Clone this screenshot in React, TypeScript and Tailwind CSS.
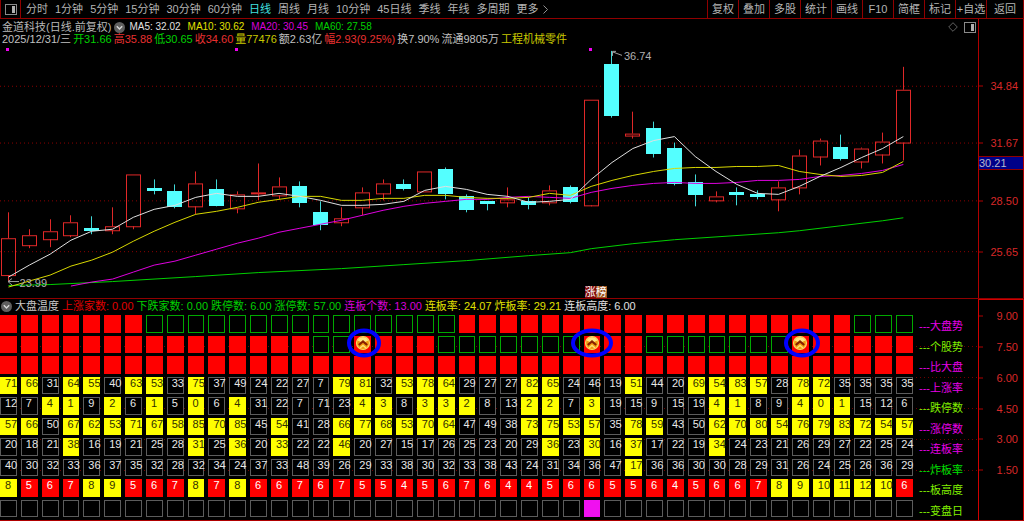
import { clsx } from 'clsx';

type Candle = [top: number, bottom: number, high: number, low: number, up: 0 | 1];

const PERIODS = ['分时', '1分钟', '5分钟', '15分钟', '30分钟', '60分钟', '日线', '周线', '月线', '10分钟', '45日线', '季线', '年线', '多周期'];
const TOOLS = ['复权', '叠加', '多股', '统计', '画线', 'F10', '简框', '标记', '+自选'];

const COLS = 44;
const TOP = 19;
const HEIGHT = 280;
const cx = (i: number) => 8.5 + 20.81 * i;

// Body top, body bottom, high, low, rising
const CANDLES: Candle[] = [
  [239, 276, 213, 282, 1], [236, 246, 230, 249, 1], [232, 240, 220, 248, 1], [223, 236, 216, 238, 1],
  [229, 232, 217, 235, 0], [227, 231, 208, 235, 1], [175, 227, 175, 230, 1], [189, 192, 180, 195, 0],
  [192, 208, 185, 209, 0], [184, 207, 172, 215, 1], [190, 207, 180, 207, 0], [195, 209, 192, 214, 1],
  [193, 194, 164, 201, 1], [187, 196, 178, 200, 1], [187, 204, 182, 208, 0], [213, 226, 202, 231, 0],
  [219, 223, 208, 227, 1], [193, 208, 188, 216, 1], [184, 194, 180, 201, 1], [185, 190, 180, 191, 0],
  [172, 192, 172, 192, 1], [170, 195, 168, 200, 0], [197, 211, 195, 213, 0], [202, 205, 202, 211, 0],
  [200, 203, 188, 208, 1], [202, 206, 198, 210, 0], [191, 203, 186, 206, 1], [188, 203, 186, 204, 0],
  [100, 206, 100, 207, 1], [64, 116, 51, 118, 0], [134, 136, 112, 139, 1], [128, 154, 122, 158, 0],
  [148, 185, 143, 186, 0], [183, 196, 175, 207, 0], [197, 201, 192, 203, 1], [193, 196, 188, 206, 0],
  [195, 198, 191, 200, 0], [188, 200, 182, 212, 1], [156, 188, 150, 195, 1], [141, 157, 139, 166, 1],
  [147, 159, 135, 161, 0], [149, 162, 148, 169, 1], [142, 155, 133, 164, 1], [90, 143, 67, 161, 1],
];

const MA5 = [278, 266, 255, 241, 232, 230, 218, 210, 206, 198, 194, 197, 197, 194, 197, 201, 206, 206, 205, 202, 191, 187, 190, 195, 197, 203, 202, 200, 180, 163, 149, 141, 137, 157, 172, 185, 194, 195, 187, 177, 168, 158, 149, 137];
const MA10 = [288, 282, 276, 267, 261, 253, 242, 232, 223, 215, 212, 208, 203, 200, 197, 197, 201, 201, 199, 199, 196, 196, 198, 199, 199, 198, 194, 196, 187, 181, 176, 172, 169, 168, 168, 167, 167, 166, 172, 175, 177, 176, 173, 162];
const MA20 = [287, 283, 280, 273, 266, 262, 256, 250, 244, 239, 233, 229, 225, 221, 216, 211, 207, 204, 202, 200, 200, 198, 197, 198, 199, 193, 189, 186, 184, 183, 184, 184, 183, 181, 181, 180, 177, 176, 174, 171, 165];
const MA60: [number, number][] = [[0, 286], [2, 285], [5, 282], [9, 277], [12, 273], [16, 269], [19, 265], [22, 261], [25, 256], [27, 253], [28, 249], [30, 244], [32, 240], [37, 233], [38, 231], [40, 226], [42, 221], [43, 218]];

const line = (ys: number[], from = 0) => ys.map((y, i) => `${cx(i + from)},${y}`).join(' ');

const PRICES: [string, number][] = [['34.84', 86], ['31.67', 143], ['28.50', 201], ['25.65', 252]];
const LEVELS = ['9.00', '7.50', '6.00', '4.50', '3.00', '1.50'];

const QUOTE = [
  ['2025/12/31/三', 'text-[#c0c0c0]'],
  ['开31.66', 'text-[#00d000]'],
  ['高35.88', 'text-[#e83030]'],
  ['低30.65', 'text-[#00d000]'],
  ['收34.60', 'text-[#e83030]'],
  ['量77476', 'text-[#c8c800]'],
  ['额2.63亿', 'text-[#c0c0c0]'],
  ['幅2.93(9.25%)', 'text-[#e83030]'],
  ['换7.90%', 'text-[#c0c0c0]'],
  ['流通9805万', 'text-[#c0c0c0]'],
  ['工程机械零件', 'text-[#c8c800]'],
];

const AVERAGES = [
  ['MA5: 32.02', 'text-[#e0e0e0]'],
  ['MA10: 30.62', 'text-[#e0e000]'],
  ['MA20: 30.45', 'text-[#d800d8]'],
  ['MA60: 27.58', 'text-[#00d000]'],
];

const INDICATORS = [
  ['上涨家数: 0.00', 'text-[#e00000]'],
  ['下跌家数: 0.00', 'text-[#00d000]'],
  ['跌停数: 6.00', 'text-[#00d000]'],
  ['涨停数: 57.00', 'text-[#00d000]'],
  ['连板个数: 13.00', 'text-[#d800d8]'],
  ['连板率: 24.07', 'text-[#e0e000]'],
  ['炸板率: 29.21', 'text-[#e0e000]'],
  ['连板高度: 6.00', 'text-[#e0e0e0]'],
];

const RED = 'bg-[#ff0000] text-white';
const GREEN = 'bg-black ring-1 ring-inset ring-[#00a800]';
const GRAY = 'bg-black ring-1 ring-inset ring-[#5c5c5c] text-[#e8e8e8]';
const YELLOW = 'bg-[#ffff00] text-[#303000]';
const MAGENTA = 'bg-[#f010f0]';

const PINK_TEXT = 'text-[#e800e8]';
const LIME_TEXT = 'text-[#80f000]';

type Row = { label: string; tone: string; values?: number[]; style: (v: number, i: number) => string };

const ROWS: Row[] = [
  { label: '大盘势', tone: PINK_TEXT, style: (_, i) => ((i > 6 && i < 22) || i > 40 ? GREEN : RED) },
  { label: '个股势', tone: LIME_TEXT, style: (_, i) => ([15, 16].includes(i) || (i > 20 && i < 28) || (i > 30 && i < 38) ? GREEN : RED) },
  { label: '比大盘', tone: PINK_TEXT, style: () => RED },
  {
    label: '上涨率', tone: PINK_TEXT, style: (v) => (v > 50 ? YELLOW : GRAY),
    values: [71, 66, 31, 64, 55, 40, 63, 53, 33, 75, 37, 49, 24, 22, 27, 7, 79, 81, 32, 53, 78, 64, 29, 27, 27, 82, 65, 24, 46, 19, 51, 44, 20, 69, 54, 83, 57, 28, 78, 72, 35, 35, 35, 35],
  },
  {
    label: '跌停数', tone: LIME_TEXT, style: (v) => (v < 5 ? YELLOW : GRAY),
    values: [12, 7, 4, 1, 9, 2, 6, 1, 5, 0, 6, 4, 31, 22, 7, 71, 23, 4, 3, 8, 3, 3, 2, 8, 13, 2, 2, 7, 3, 19, 15, 9, 15, 19, 4, 1, 8, 9, 4, 0, 1, 15, 12, 6],
  },
  {
    label: '涨停数', tone: PINK_TEXT, style: (v) => (v > 50 ? YELLOW : GRAY),
    values: [57, 66, 50, 67, 62, 53, 71, 67, 58, 85, 70, 85, 45, 54, 41, 28, 66, 77, 68, 53, 70, 64, 47, 49, 38, 73, 75, 53, 57, 35, 78, 59, 43, 50, 62, 70, 80, 54, 76, 79, 83, 72, 54, 57],
  },
  {
    label: '连板率', tone: PINK_TEXT, style: (v) => (v >= 30 ? YELLOW : GRAY),
    values: [20, 18, 21, 38, 16, 19, 21, 25, 28, 31, 25, 36, 20, 33, 22, 22, 46, 20, 27, 15, 17, 26, 25, 23, 20, 29, 36, 23, 30, 16, 37, 17, 22, 19, 34, 24, 23, 21, 26, 29, 27, 22, 25, 24],
  },
  {
    label: '炸板率', tone: 'text-[#00e000]', style: (v) => (v < 20 ? YELLOW : GRAY),
    values: [40, 30, 32, 33, 36, 37, 35, 32, 28, 32, 34, 24, 37, 33, 48, 39, 26, 29, 33, 38, 30, 32, 33, 38, 43, 24, 31, 34, 36, 47, 17, 36, 36, 30, 30, 28, 29, 31, 26, 24, 25, 26, 36, 29],
  },
  {
    label: '板高度', tone: LIME_TEXT, style: (v) => (v >= 8 ? YELLOW : RED),
    values: [8, 5, 6, 7, 8, 9, 5, 6, 7, 8, 7, 8, 6, 6, 7, 6, 7, 5, 5, 4, 5, 6, 7, 6, 4, 4, 5, 6, 6, 5, 5, 6, 4, 5, 6, 6, 7, 8, 9, 10, 11, 12, 10, 6],
  },
  { label: '变盘日', tone: LIME_TEXT, style: (_, i) => (i === 28 ? MAGENTA : GRAY) },
];

// Column of each marked signal, with the radius and shift of its ring
const SIGNALS: Record<number, { rx: number; dx: number }> = {
  17: { rx: 15, dx: 1 },
  28: { rx: 19, dx: 0 },
  38: { rx: 16, dx: 2 },
};

function PanelIcon() {
  return (
    <svg width="12" height="11" viewBox="0 0 12 11" fill="none" shapeRendering="crispEdges">
      <rect x="0.5" y="0.5" width="11" height="10" stroke="#8a8a8a" />
      <rect x="7" y="2" width="3" height="7" fill="#b0b0b0" />
    </svg>
  );
}

function Chevron() {
  return (
    <svg width="11" height="11" viewBox="0 0 11 11" fill="none">
      <circle cx="5.5" cy="5.5" r="5.5" fill="#5f5f5f" />
      <path d="M2.8 4.3 5.5 7l2.7-2.7" stroke="#d8d8d8" strokeWidth="1.4" />
    </svg>
  );
}

function Signal({ rx, dx }: { rx: number; dx: number }) {
  return (
    <svg
      className="absolute left-1/2 top-1/2 z-10 -translate-x-1/2 -translate-y-1/2"
      width="46"
      height="32"
      viewBox="-23 -16 46 32"
      fill="none"
    >
      <circle cx="0" cy="-1" r="6.5" fill="#f09a10" stroke="#f8d860" strokeWidth="1.2" />
      <path d="M-5.3-3.5a6 6 0 0 1 10.6 0L0-1Z" fill="#ffe880" />
      <path d="M-4.2 1 0-2.6 4.2 1" stroke="#8a2000" strokeWidth="2.2" />
      <path d="M-3 4 0 1.4 3 4" stroke="#ffe070" strokeWidth="1.4" />
      <ellipse cx={dx} cy="-1" rx={rx} ry="12.5" stroke="#0000ff" strokeWidth="4" />
    </svg>
  );
}

function Toolbar() {
  return (
    <header className="flex h-[19px] shrink-0 items-stretch border-b border-[#900000] text-[#b4b4b4]">
      <button aria-label="面板" className="flex w-[21px] items-center justify-center border-x border-[#900000]">
        <PanelIcon />
      </button>
      <nav className="flex flex-1 items-center gap-[7px] pl-[5px]">
        {PERIODS.map((p) => (
          <button key={p} className={clsx(p === '日线' && 'text-[#40e0e0]')}>{p}</button>
        ))}
        <button className="flex items-center gap-1">
          更多
          <svg width="5" height="9" viewBox="0 0 5 9" fill="none">
            <path d="m.5.5 4 4-4 4" stroke="#909090" />
          </svg>
        </button>
      </nav>
      {TOOLS.map((t) => (
        <button key={t} className="w-[31px] border-l border-[#900000]">{t}</button>
      ))}
      <button className="w-[38px] border-x border-[#900000]">返回</button>
    </header>
  );
}

function KLine() {
  return (
    <svg className="absolute inset-0 h-full w-full" viewBox={`0 ${TOP} 978 ${HEIGHT}`} preserveAspectRatio="none" fill="none">
      <g stroke="#8c0000" strokeDasharray="1 3" shapeRendering="crispEdges">
        {PRICES.map(([p, y]) => <path key={p} d={`M0 ${y}.5H978`} />)}
      </g>
      <g shapeRendering="crispEdges">
        {CANDLES.map(([top, bottom, high, low, up], i) => {
          const x = Math.floor(cx(i));
          return up ? (
            <g key={i} stroke="#e02828">
              <path d={`M${x + 0.5} ${high}V${top}M${x + 0.5} ${bottom}V${low}`} />
              <rect x={x - 6.5} y={top + 0.5} width="14" height={bottom - top} />
            </g>
          ) : (
            <g key={i}>
              <path d={`M${x + 0.5} ${high}V${low}`} stroke="#40d8d8" />
              <rect x={x - 7} y={top} width="15" height={bottom - top} fill="#54ffff" />
            </g>
          );
        })}
      </g>
      <g strokeWidth="1">
        <polyline points={MA60.map(([i, y]) => `${cx(i)},${y + 0.5}`).join(' ')} stroke="#00d000" />
        <polyline points={line(MA20, 3)} stroke="#e000e0" />
        <polyline points={line(MA10)} stroke="#d8d800" />
        <polyline points={line(MA5)} stroke="#e0e0e0" />
      </g>
      <g fill="#f000f0" shapeRendering="crispEdges">
        {[0, 11, 28].map((i) => <rect key={i} x={Math.floor(cx(i)) - 2} y="48" width="3" height="3" />)}
      </g>
      <g stroke="#a0a0a0">
        <path d="M622 55.5 612.5 52M612.5 56V51.5H616" />
        <path d="M19 282.5H8M12 279.5 8 282.5 12 286" />
      </g>
    </svg>
  );
}

function PriceChart() {
  return (
    <section className="flex min-h-[280px] flex-[280] border-b border-[#900000]">
      <div className="relative flex-1">
        <KLine />
        <div className="relative flex flex-col pl-[2px] pt-[2px] leading-[12px]">
          <div className="flex items-center gap-[3px]">
            <h1 className="text-[#b8b8b8]">金道科技(日线.前复权)</h1>
            <button aria-label="指标"><Chevron /></button>
            <p className="flex flex-1 gap-[7px] pl-px text-[10px]">
              {AVERAGES.map(([t, c]) => <span key={t} className={c}>{t}</span>)}
            </p>
            <div className="flex items-center gap-[6px] pr-[2px]">
              <svg width="10" height="10" viewBox="0 0 10 10" fill="none">
                <path d="M5 .7 9.3 5 5 9.3.7 5Z" stroke="#606060" />
              </svg>
              <PanelIcon />
            </div>
          </div>
          <p className="flex gap-[2px]">
            {QUOTE.map(([t, c]) => <span key={t} className={c}>{t}</span>)}
          </p>
        </div>
        <span className="absolute left-[63.8%] top-[11%] text-[#b0b0b0]">36.74</span>
        <span className="absolute bottom-[3%] left-[2%] text-[#b0b0b0]">23.99</span>
        <span className="absolute bottom-0 left-[59.8%] flex leading-[12px] text-white">
          <span className="bg-[#800808]">涨</span>
          <span className="bg-[#9c5420]">榜</span>
        </span>
      </div>
      <div className="relative w-[46px] border-x border-[#b00000] text-[#d82828]">
        {PRICES.map(([p, y]) => (
          <div
            key={p}
            className="absolute inset-x-0 flex -translate-y-1/2 items-center justify-between pr-[5px]"
            style={{ top: `${((y - TOP + 0.5) / HEIGHT) * 100}%` }}
          >
            <i className="h-px w-1 bg-[#b00000]" />
            {p}
          </div>
        ))}
        <div className="absolute inset-x-0 top-[49%] border-y border-[#900000] bg-[#000088] leading-[12px] text-[#b8b8c8]">30.21</div>
      </div>
    </section>
  );
}

function HeatTable() {
  return (
    <table className="relative mb-[3px] mt-[2px] block flex-1">
      <tbody className="grid h-full min-h-[202px] auto-rows-fr gap-y-[3px]">
        {ROWS.map(({ label, tone, values, style }, r) => (
          <tr key={label} className="grid grid-cols-[repeat(44,minmax(0,1fr))_61px] gap-x-1">
            {Array.from({ length: COLS }, (_, i) => (
              <td
                key={i}
                className={clsx('relative whitespace-nowrap pl-[5px] pt-px leading-[11px]', style(values?.[i] ?? 0, i))}
              >
                {values?.[i]}
                {r === 1 && SIGNALS[i] && <Signal {...SIGNALS[i]} />}
              </td>
            ))}
            <th scope="row" className={clsx('whitespace-nowrap pl-[2px] pt-[5px] text-left font-normal leading-[12px]', tone)}>
              ---{label}
            </th>
          </tr>
        ))}
      </tbody>
    </table>
  );
}

function Temperature() {
  return (
    <section className="flex min-h-[222px] flex-[222] border-b border-[#b00000]">
      <div className="relative flex flex-1 flex-col">
        <svg className="absolute inset-0 h-full w-full" viewBox="0 299 978 221" preserveAspectRatio="none">
          <g stroke="#700000" strokeDasharray="1 3" shapeRendering="crispEdges">
            {LEVELS.slice(1).map((l, i) => <path key={l} d={`M0 ${346.5 + i * 31}H978`} />)}
          </g>
        </svg>
        <div className="relative flex h-[14px] shrink-0 items-center gap-[3px] pl-px leading-[14px]">
          <button aria-label="指标"><Chevron /></button>
          <h2 className="text-[#c8c8c8]">大盘温度</h2>
          {INDICATORS.map(([t, c]) => <span key={t} className={c}>{t}</span>)}
        </div>
        <HeatTable />
      </div>
      <div className="relative w-[46px] border-x border-t border-[#d00000] text-[#d82828]">
        {LEVELS.map((l, i) => (
          <div
            key={l}
            className="absolute inset-x-0 flex -translate-y-1/2 items-center justify-between pr-[5px]"
            style={{ top: `${((16 + i * 31) / 221) * 100}%` }}
          >
            <i className="h-px w-1 bg-[#b00000]" />
            {l}
          </div>
        ))}
      </div>
    </section>
  );
}

export default function App() {
  return (
    <main className="flex min-h-screen flex-col overflow-hidden bg-black font-['Liberation_Sans','Noto_Sans_CJK_SC',sans-serif] text-[11px] leading-[13px]">
      <Toolbar />
      <PriceChart />
      <Temperature />
    </main>
  );
}
